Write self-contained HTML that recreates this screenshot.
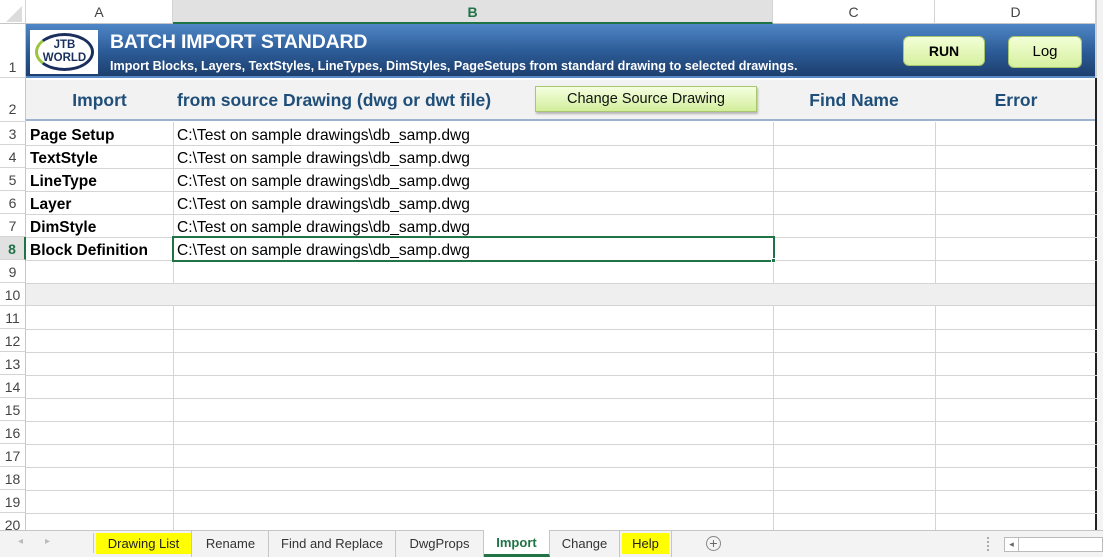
<!DOCTYPE html>
<html><head><style>
*{margin:0;padding:0;box-sizing:border-box}
body{width:1103px;height:557px;overflow:hidden;background:#fff;font-family:"Liberation Sans",Calibri,sans-serif;position:relative}
.a{position:absolute}
.ch{top:0;height:24px;background:#fff;border-right:1px solid #d4d4d4;border-bottom:1px solid #c6c6c6;text-align:center;font-size:14px;line-height:24px;color:#444}
.rh{left:0;width:26px;border-bottom:1px solid #d4d4d4;border-right:1px solid #c6c6c6;font-size:14px;color:#444;text-align:center;background:#fff}
.hl{height:1px;background:#d4d4d4;left:26px;width:1071px}
.vl{width:1px;background:#d4d4d4}
.cell{font-size:15.6px;color:#000;height:23px;line-height:23px}
.lb{font-size:15.5px;font-weight:bold}
.btn{background:linear-gradient(#f3ffd6,#d6f0a0);border:1px solid #a6c46a;border-radius:6px;text-align:center;color:#000;font-size:15px}
.tab{top:530px;height:27px;line-height:27px;font-size:13px;color:#333;text-align:center;border-right:1px solid #c6c6c6}
</style></head><body>
<div class="a ch" style="left:0;width:26px;background:#fff"></div>
<div class="a" style="left:6px;top:6px;width:0;height:0;border-left:16px solid transparent;border-bottom:16px solid #dcdcdc"></div>
<div class="a ch" style="left:26px;width:147px">A</div>
<div class="a ch" style="left:173px;width:600px;background:#e1e1e1;color:#217346;font-weight:bold;border-bottom:2px solid #217346">B</div>
<div class="a ch" style="left:773px;width:162px">C</div>
<div class="a ch" style="left:935px;width:162px">D</div>
<div class="a" style="left:1097px;top:0;width:6px;height:530px;background:#f3f3f3"></div>
<div class="a" style="left:1095px;top:0;width:2px;height:530px;background:#d0d0d0"></div>
<div class="a" style="left:1095px;top:78px;width:2px;height:452px;background:#222"></div>

<div class="a rh" style="top:24px;height:54px;line-height:86px">1</div>
<div class="a rh" style="top:78px;height:44px;line-height:62px">2</div>
<div class="a rh" style="top:122px;height:23px;line-height:25px">3</div>
<div class="a rh" style="top:145px;height:23px;line-height:25px">4</div>
<div class="a rh" style="top:168px;height:23px;line-height:25px">5</div>
<div class="a rh" style="top:191px;height:23px;line-height:25px">6</div>
<div class="a rh" style="top:214px;height:23px;line-height:25px">7</div>
<div class="a rh" style="top:237px;height:23px;line-height:25px;background:#e1e1e1;color:#217346;font-weight:bold;border-right:2px solid #217346">8</div>
<div class="a rh" style="top:260px;height:23px;line-height:25px">9</div>
<div class="a rh" style="top:283px;height:23px;line-height:25px">10</div>
<div class="a rh" style="top:306px;height:23px;line-height:25px">11</div>
<div class="a rh" style="top:329px;height:23px;line-height:25px">12</div>
<div class="a rh" style="top:352px;height:23px;line-height:25px">13</div>
<div class="a rh" style="top:375px;height:23px;line-height:25px">14</div>
<div class="a rh" style="top:398px;height:23px;line-height:25px">15</div>
<div class="a rh" style="top:421px;height:23px;line-height:25px">16</div>
<div class="a rh" style="top:444px;height:23px;line-height:25px">17</div>
<div class="a rh" style="top:467px;height:23px;line-height:25px">18</div>
<div class="a rh" style="top:490px;height:23px;line-height:25px">19</div>
<div class="a rh" style="top:513px;height:23px;line-height:25px">20</div>

<div class="a vl" style="left:173px;top:122px;height:161px"></div>
<div class="a vl" style="left:773px;top:122px;height:161px"></div>
<div class="a vl" style="left:935px;top:122px;height:161px"></div>
<div class="a vl" style="left:173px;top:306px;height:224px"></div>
<div class="a vl" style="left:773px;top:306px;height:224px"></div>
<div class="a vl" style="left:935px;top:306px;height:224px"></div>
<div class="a hl" style="top:145px"></div><div class="a hl" style="top:168px"></div>
<div class="a hl" style="top:191px"></div><div class="a hl" style="top:214px"></div>
<div class="a hl" style="top:237px"></div><div class="a hl" style="top:260px"></div>
<div class="a" style="left:26px;top:283px;width:1069px;height:23px;background:#efefef;border-top:1px solid #d4d4d4;border-bottom:1px solid #d4d4d4"></div>
<div class="a hl" style="top:329px"></div><div class="a hl" style="top:352px"></div>
<div class="a hl" style="top:375px"></div><div class="a hl" style="top:398px"></div>
<div class="a hl" style="top:421px"></div><div class="a hl" style="top:444px"></div>
<div class="a hl" style="top:467px"></div><div class="a hl" style="top:490px"></div>
<div class="a hl" style="top:513px"></div>

<div class="a" style="left:26px;top:24px;width:1069px;height:54px;background:linear-gradient(#4f86c6,#2b5a95 55%,#1d3f6e);border-bottom:2px solid #5a8ac6"></div>
<div class="a" style="left:30px;top:30px;width:68px;height:44px;background:#fff"></div>
<div class="a" style="left:35px;top:33px;width:59px;height:38px;border:3px solid #1b2f5e;border-radius:50%;border-left-color:#9bc53d"></div>
<div class="a" style="left:35px;top:39px;width:59px;text-align:center;font-weight:bold;font-size:11.5px;line-height:13px;color:#1b2f5e">JTB<br>WORLD</div>
<div class="a" style="left:110px;top:31px;color:#fff;font-size:19.5px;font-weight:600;letter-spacing:-.2px">BATCH IMPORT STANDARD</div>
<div class="a" style="left:110px;top:59px;color:#fff;font-size:12.6px;font-weight:bold">Import Blocks, Layers, TextStyles, LineTypes, DimStyles, PageSetups from standard drawing to selected drawings.</div>
<div class="a btn" style="left:903px;top:36px;width:82px;height:30px;line-height:28px;font-weight:bold;font-size:14px">RUN</div>
<div class="a btn" style="left:1008px;top:36px;width:74px;height:32px;line-height:30px">Log</div>

<div class="a" style="left:26px;top:80px;width:1069px;height:41px;background:#f2f2f2;border-bottom:2px solid #9cb3cf"></div>
<div class="a" style="left:26px;top:90px;width:147px;text-align:center;color:#1f4e79;font-weight:bold;font-size:17.5px">Import</div>
<div class="a" style="left:177px;top:90px;color:#1f4e79;font-weight:bold;font-size:17.5px">from source Drawing (dwg or dwt file)</div>
<div class="a" style="left:773px;top:90px;width:162px;text-align:center;color:#1f4e79;font-weight:bold;font-size:17.5px">Find Name</div>
<div class="a" style="left:935px;top:90px;width:162px;text-align:center;color:#1f4e79;font-weight:bold;font-size:17.5px">Error</div>
<div class="a" style="left:535px;top:86px;width:222px;height:26px;background:linear-gradient(#f5ffe0,#d3ee9c);border:1px solid #a9c76e;text-align:center;line-height:24px;font-size:14.5px;color:#111;box-shadow:1px 2px 2px rgba(0,0,0,.25)">Change Source Drawing</div>

<div class="a cell lb" style="left:30px;top:124px">Page Setup</div>
<div class="a cell lb" style="left:30px;top:147px">TextStyle</div>
<div class="a cell lb" style="left:30px;top:170px">LineType</div>
<div class="a cell lb" style="left:30px;top:193px">Layer</div>
<div class="a cell lb" style="left:30px;top:216px">DimStyle</div>
<div class="a cell lb" style="left:30px;top:239px">Block Definition</div>
<div class="a cell" style="left:177px;top:124px">C:\Test on sample drawings\db_samp.dwg</div>
<div class="a cell" style="left:177px;top:147px">C:\Test on sample drawings\db_samp.dwg</div>
<div class="a cell" style="left:177px;top:170px">C:\Test on sample drawings\db_samp.dwg</div>
<div class="a cell" style="left:177px;top:193px">C:\Test on sample drawings\db_samp.dwg</div>
<div class="a cell" style="left:177px;top:216px">C:\Test on sample drawings\db_samp.dwg</div>
<div class="a cell" style="left:177px;top:239px">C:\Test on sample drawings\db_samp.dwg</div>
<div class="a" style="left:172px;top:236px;width:603px;height:26px;border:2px solid #217346"></div>
<div class="a" style="left:771px;top:258px;width:5px;height:5px;background:#217346;border:1px solid #fff"></div>

<div class="a" style="left:0;top:530px;width:1103px;height:27px;background:#f3f3f3;border-top:1px solid #c6c6c6"></div>
<div class="a" style="left:18px;top:536px;font-size:10px;color:#bbb">◂</div>
<div class="a" style="left:45px;top:536px;font-size:10px;color:#bbb">▸</div>
<div class="a" style="left:93px;top:533px;width:1px;height:20px;background:#c6c6c6"></div>
<div class="a tab" style="left:96px;width:96px;"><span style="display:block;margin:3px 0;height:21px;line-height:21px;background:#ffff00;color:#222">Drawing List</span></div>
<div class="a tab" style="left:193px;width:76px">Rename</div>
<div class="a tab" style="left:269px;width:127px">Find and Replace</div>
<div class="a tab" style="left:396px;width:88px">DwgProps</div>
<div class="a tab" style="left:484px;width:66px;background:#fff;color:#217346;font-weight:bold;border-bottom:3px solid #217346;line-height:25px">Import</div>
<div class="a tab" style="left:550px;width:70px">Change</div>
<div class="a tab" style="left:620px;width:52px"><span style="display:block;margin:3px 2px;height:21px;line-height:21px;background:#ffff00;color:#222">Help</span></div>
<div class="a" style="left:706px;top:536px;width:15px;height:15px;border:1px solid #888;border-radius:50%;text-align:center;line-height:12px;font-size:14px;color:#666">+</div>
<div class="a" style="left:987px;top:537px;width:2px;height:14px;border-left:2px dotted #aaa"></div>
<div class="a" style="left:1004px;top:537px;width:99px;height:15px;background:#fff;border:1px solid #bbb"></div>
<div class="a" style="left:1004px;top:537px;width:15px;height:15px;border:1px solid #bbb;font-size:9px;line-height:13px;text-align:center;color:#666">◂</div>
</body></html>
